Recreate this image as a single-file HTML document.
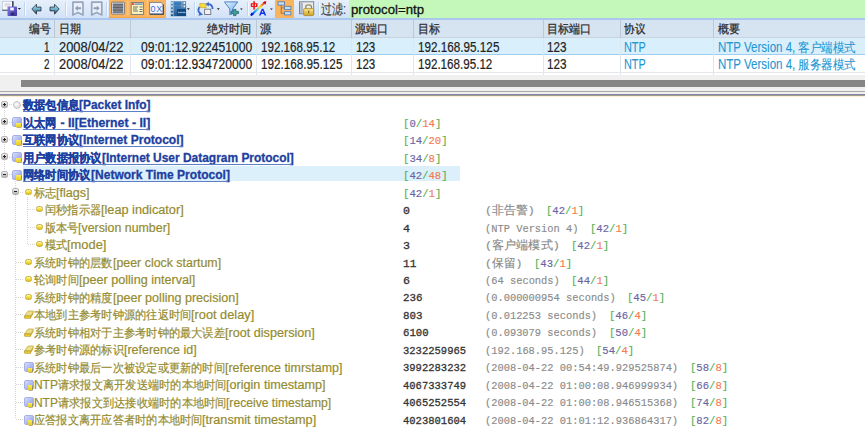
<!DOCTYPE html><html><head><meta charset="utf-8"><style>
*{margin:0;padding:0;box-sizing:border-box}
html,body{width:865px;height:439px;overflow:hidden;background:#fff;font-family:"Liberation Sans",sans-serif}
.f{position:absolute;white-space:nowrap;display:block;overflow:visible}
.f i{font-style:normal;display:inline-block;transform-origin:0 0;white-space:pre}
.a{position:absolute}
#tb{position:absolute;left:0;top:0;width:865px;height:18px;background:linear-gradient(#e7f0fb,#d2e2f7)}
#tbl{position:absolute;left:0;top:18px;width:865px;height:2px;background:#abc7ee}
.sep{position:absolute;top:2px;width:1px;height:14px;background:#c2d6f0;box-shadow:1px 0 0 #f5f9ff}
.org{position:absolute;top:0;height:18px;background:#fbb45e}
#filter{position:absolute;left:349px;top:0;width:516px;height:18px;background:#c4f8bb}
#hdr{position:absolute;left:0;top:20px;width:865px;height:18px;background:#d6e3f1;border-bottom:1px solid #c8d3df}
.hc{position:absolute;top:20px;width:1px;height:18px;background:#bdc8d4}
.cl{position:absolute;width:1px;background:#dfe5ec}
.h{font-size:11.6px;line-height:19px;color:#2a2a2a;-webkit-text-stroke:0.25px #2a2a2a}
.t{font-size:14px;line-height:18px;color:#222;-webkit-text-stroke:0.2px currentColor}
.ntp{color:#2496d2;-webkit-text-stroke:0.1px currentColor}
.n{font-size:12px;line-height:17.5px}
.b{font-weight:bold;color:#1d3f9f;-webkit-text-stroke:0.3px currentColor}
.u{position:absolute;height:1px;background:#5f7ec8}
.o{color:#958c30;-webkit-text-stroke:0.2px currentColor}
.m{font-family:"Liberation Mono",monospace;font-size:11.6px;line-height:17.5px;-webkit-text-stroke:0.15px currentColor}
.v{color:#333;-webkit-text-stroke:0.3px currentColor}
.d{color:#8a8a8a}
.g{color:#52b152}.p{color:#6a64a4}.r{color:#f57a50}
.dv{position:absolute;width:1px;background:repeating-linear-gradient(#d6d6d6 0 1px,transparent 1px 2px)}
.dh{position:absolute;height:1px;background:repeating-linear-gradient(90deg,#d6d6d6 0 1px,transparent 1px 2px)}
.ex{position:absolute;width:7px;height:7px;border:1px solid #b4b4b4;background:linear-gradient(#f0f0f0,#b4b4b4);border-radius:2px}
.ex:before{content:"";position:absolute;left:1px;top:2px;width:3px;height:1px;background:#222}
.ex.pl:after{content:"";position:absolute;left:2px;top:1px;width:1px;height:3px;background:#222}
</style></head><body>
<div id="tb"></div><div id="tbl"></div>
<div class="sep" style="left:24px"></div>
<div class="sep" style="left:65px"></div>
<div class="sep" style="left:106px"></div>
<div class="sep" style="left:194px"></div>
<div class="sep" style="left:247px"></div>
<div class="sep" style="left:318px"></div>
<div class="org" style="left:109px;width:57px"></div>
<div class="org" style="left:275px;width:19px"></div>
<svg class="a" style="left:0;top:0" width="350" height="18" viewBox="0 0 350 18">
<defs>
<linearGradient id="gArr" x1="0" y1="0" x2="0" y2="1"><stop offset="0" stop-color="#b0e0f0"/><stop offset="0.5" stop-color="#6fb0cc"/><stop offset="1" stop-color="#1e3444"/></linearGradient>
<linearGradient id="gFl" x1="0" y1="0" x2="1" y2="1"><stop offset="0" stop-color="#8a80e8"/><stop offset="1" stop-color="#3a2ea0"/></linearGradient>
<linearGradient id="gHex" x1="0" y1="0" x2="0" y2="1"><stop offset="0" stop-color="#6aa0d0"/><stop offset="1" stop-color="#1a5590"/></linearGradient>
<linearGradient id="gRb" x1="0" y1="1" x2="1" y2="0"><stop offset="0" stop-color="#0010e0"/><stop offset="0.35" stop-color="#20c0ff"/><stop offset="0.6" stop-color="#ffe020"/><stop offset="1" stop-color="#e01010"/></linearGradient>
<linearGradient id="gLk" x1="0" y1="0" x2="0" y2="1"><stop offset="0" stop-color="#ffe890"/><stop offset="1" stop-color="#d0a020"/></linearGradient>
<linearGradient id="gFun" x1="0" y1="0" x2="1" y2="1"><stop offset="0" stop-color="#e0f4ff"/><stop offset="1" stop-color="#6aa8e0"/></linearGradient>
</defs>
<!-- save icon -->
<rect x="2.5" y="1.5" width="10.5" height="9" fill="#fbfcfe" stroke="#c0c8d4" stroke-width="0.8"/>
<rect x="12" y="1.2" width="1.6" height="9.5" fill="#3c4452"/>
<rect x="2.2" y="9.6" width="11.4" height="1.3" fill="#5a6576"/>
<line x1="4.5" y1="4" x2="10.5" y2="4" stroke="#9ab0e0" stroke-width="0.8"/>
<line x1="4.5" y1="6" x2="10.5" y2="6" stroke="#e0b0b0" stroke-width="0.8"/>
<rect x="7.5" y="6.5" width="9.5" height="9.5" rx="0.8" fill="url(#gFl)"/>
<rect x="10.2" y="7.6" width="3.6" height="2.8" fill="#f4f4ff"/>
<rect x="10.8" y="12.6" width="3.4" height="2.6" fill="#30305a"/>
<path d="M17.8 8 L21 8 L19.4 9.8 Z" fill="#222"/>
<!-- back / forward arrows -->
<path d="M31.8 9 L36.5 4.2 L36.5 7.1 L41 7.1 L41 10.9 L36.5 10.9 L36.5 14.2 Z" fill="url(#gArr)" stroke="#24323e" stroke-width="0.8" stroke-linejoin="round"/>
<path d="M59.2 9 L54.5 4.2 L54.5 7.1 L50 7.1 L50 10.9 L54.5 10.9 L54.5 14.2 Z" fill="url(#gArr)" stroke="#24323e" stroke-width="0.8" stroke-linejoin="round"/>
<!-- bookmarks -->
<path d="M72.9 2.2 L83 2.2 L83 15 L78 12.6 L72.9 15 Z" fill="#eaf0f9" stroke="#98a7be" stroke-width="1.7" stroke-linejoin="round"/>
<path d="M75 8.2 L77.8 5.4 L77.8 7.2 L81 7.2 L81 9.2 L77.8 9.2 L77.8 11 Z" fill="#8e9db6"/>
<path d="M91.7 2.2 L101.8 2.2 L101.8 15 L96.7 12.6 L91.7 15 Z" fill="#eaf0f9" stroke="#98a7be" stroke-width="1.7" stroke-linejoin="round"/>
<path d="M99.6 8.2 L96.8 5.4 L96.8 7.2 L93.6 7.2 L93.6 9.2 L96.8 9.2 L96.8 11 Z" fill="#8e9db6"/>
<!-- orange group icons -->
<rect x="127.4" y="0" width="1" height="18" fill="#fdca8a"/>
<rect x="146.8" y="0" width="1" height="18" fill="#fdca8a"/>
<rect x="109" y="16.8" width="57" height="1.2" fill="#f2a450"/>
<rect x="111.6" y="2.2" width="12.8" height="11.8" rx="0.8" fill="#eef2f8" stroke="#5c6270" stroke-width="0.8"/>
<rect x="112.8" y="3.4" width="10.4" height="9.4" fill="#9a9ea8"/>
<g stroke="#4e525e" stroke-width="0.8"><line x1="112.8" y1="4.3" x2="123.2" y2="4.3"/><line x1="112.8" y1="5.9" x2="123.2" y2="5.9"/><line x1="112.8" y1="7.5" x2="123.2" y2="7.5"/><line x1="112.8" y1="9.1" x2="123.2" y2="9.1"/><line x1="112.8" y1="10.7" x2="123.2" y2="10.7"/><line x1="112.8" y1="12.3" x2="123.2" y2="12.3"/></g>
<rect x="131.2" y="2.6" width="12.2" height="11.8" fill="#fbf4b8" stroke="#707888" stroke-width="0.9"/>
<rect x="132" y="3.3" width="2.2" height="1.6" fill="#e03030"/>
<rect x="134.6" y="3.5" width="8" height="1.2" fill="#6080c0"/>
<g stroke="#6a7080" stroke-width="1"><line x1="133" y1="7" x2="138" y2="7"/><line x1="133" y1="9" x2="137" y2="9"/><line x1="133" y1="11" x2="138" y2="11"/><line x1="139.5" y1="7" x2="142.5" y2="7"/><line x1="139.5" y1="9.5" x2="142.5" y2="9.5"/><line x1="139.5" y1="11.5" x2="142.5" y2="11.5"/></g>
<path d="M149.6 2.4 L161 2.4 L163.5 4.9 L163.5 14.4 L149.6 14.4 Z" fill="#f6f8fd" stroke="#70788a" stroke-width="0.9"/>
<path d="M162.6 4.5 L163.8 4.5 L163.8 14.8 L150 14.8 L150 13.6 L162.6 13.6 Z" fill="#3a4458"/>
<text x="150.6" y="12.4" font-family="Liberation Sans" font-size="9" fill="#3a6ee0" letter-spacing="0.6">0X</text>
<!-- hex icon -->
<rect x="170.8" y="1" width="15.3" height="15.2" fill="url(#gHex)"/>
<g fill="#eaf2fa"><rect x="171.3" y="2" width="1.4" height="1.8"/><rect x="171.3" y="5.5" width="1.4" height="1.8"/><rect x="171.3" y="9" width="1.4" height="1.8"/><rect x="171.3" y="12.5" width="1.4" height="1.8"/><rect x="183.6" y="2" width="1.4" height="1.8"/><rect x="183.6" y="5.5" width="1.4" height="1.8"/></g>
<g fill="#3a78b8"><rect x="174" y="2.2" width="8" height="2.8"/><rect x="174" y="5.8" width="8" height="2.8"/></g>
<line x1="173.6" y1="1" x2="173.6" y2="16" stroke="#e0a060" stroke-width="0.8"/>
<line x1="181.8" y1="1" x2="181.8" y2="7.5" stroke="#e0a060" stroke-width="0.8"/>
<rect x="177" y="9" width="9" height="7" fill="#104880"/>
<g fill="#c8d8ea"><rect x="178.2" y="11.8" width="1.3" height="1.3"/><rect x="180.3" y="11.8" width="1.3" height="1.3"/><rect x="182.4" y="11.8" width="1.3" height="1.3"/><rect x="184.3" y="11.8" width="1.1" height="1.3"/></g>
<path d="M186.8 8.2 L189.8 8.2 L188.3 9.9 Z" fill="#222"/>
<!-- sync icon -->
<rect x="199.9" y="3.5" width="6.2" height="4.3" fill="#f6d840" stroke="#c0a030" stroke-width="0.6"/>
<rect x="204.6" y="9.2" width="6.2" height="5.3" fill="#f0f0f4" stroke="#70747c" stroke-width="0.9"/>
<path d="M207.8 4.2 C211.2 4.2 212.6 6.2 212.6 9" fill="none" stroke="#3a6ad0" stroke-width="1.8"/>
<path d="M205.6 4.2 L208.8 1.8 L208.8 6.6 Z" fill="#3a6ad0"/>
<path d="M199.4 7 C198 9.5 198.4 12 200 13.4" fill="none" stroke="#3a6ad0" stroke-width="1.8"/>
<path d="M198.6 15.8 L203 14.8 L199.6 11.6 Z" fill="#3a6ad0"/>
<path d="M216.8 8.2 L219.8 8.2 L218.3 9.9 Z" fill="#222"/>
<!-- filter icon -->
<path d="M224.4 1.9 L237.8 1.9 L232.5 9 L232.5 13.5 L229.8 14.8 L229.8 9 Z" fill="url(#gFun)" stroke="#4a78c0" stroke-width="0.9" stroke-linejoin="round"/>
<path d="M233.5 9.4 L236 9.4 L236 11.4 L238.6 11.4 L238.6 13.6 L236 13.6 L236 15.6 L233.5 15.6 L233.5 13.6 L231 13.6 L231 11.4 L233.5 11.4 Z" fill="#3aa0a0" stroke="#1e5a5a" stroke-width="0.7"/>
<path d="M240 8.4 L242.8 8.4 L241.4 10 Z" fill="#222"/>
<!-- text icon -->
<g fill="#f01818"><rect x="253.3" y="1.2" width="1.6" height="8.4"/><rect x="250.8" y="3.2" width="6.7" height="3.8"/></g>
<rect x="252.3" y="4.3" width="1" height="1.6" fill="#fff"/><rect x="255" y="4.3" width="1" height="1.6" fill="#fff"/>
<line x1="251" y1="15.2" x2="265.6" y2="1.8" stroke="url(#gRb)" stroke-width="2"/>
<path d="M266.4 1.2 L262.8 2.2 L265.4 4.8 Z" fill="#d01010"/>
<path d="M250.6 15.8 L251.2 12.6 L253.8 14.8 Z" fill="#0010c0"/>
<path d="M259 15.6 L261.8 8.8 L263.4 8.8 L266.2 15.6 L264.6 15.6 L264 14 L261.2 14 L260.6 15.6 Z M261.7 12.6 L263.5 12.6 L262.6 10.4 Z" fill="#1030e8"/>
<path d="M270 8.4 L272.8 8.4 L271.4 10 Z" fill="#222"/>
<!-- tree icon (orange button) -->
<path d="M281.2 5 L281.2 13.3 L284.6 13.3 M281.2 7.9 L284.6 7.9" fill="none" stroke="#a06a30" stroke-width="0.9"/>
<rect x="278" y="1.8" width="6.6" height="3.3" fill="#c8dcf2" stroke="#4a78b0" stroke-width="0.8"/>
<rect x="284.6" y="6.3" width="6.3" height="3.2" fill="#c8dcf2" stroke="#4a78b0" stroke-width="0.8"/>
<rect x="284.6" y="11.7" width="6.3" height="3.2" fill="#c8dcf2" stroke="#4a78b0" stroke-width="0.8"/>
<!-- lock icon -->
<rect x="299.5" y="1.8" width="14.2" height="12" fill="#e8ecf2" stroke="#707a88" stroke-width="0.9"/>
<rect x="300.3" y="2.6" width="2.5" height="10.4" fill="#a8b0c0"/>
<path d="M305.8 9 L305.8 6.6 C305.8 4.2 311.4 4.2 311.4 6.6 L311.4 9" fill="none" stroke="#9a8a50" stroke-width="1.3"/>
<rect x="303.6" y="8.6" width="10" height="7" rx="0.8" fill="url(#gLk)" stroke="#a08020" stroke-width="0.7"/>
<rect x="308.2" y="10.6" width="1" height="2.6" fill="#6a5010"/>
</svg>

<span class="f h" style="left:321.0px;top:0.3px;width:25.0px;font-size:14px;line-height:18px;color:#404040;-webkit-text-stroke:0.1px #404040"><i style="transform:scaleX(0.7839)">过滤:</i></span>
<div id="filter"></div>
<span class="f " style="left:350.8px;top:0.6px;width:73.0px;font-size:13.6px;line-height:18px;color:#111;-webkit-text-stroke:0.3px #111"><i style="transform:scaleX(0.9707)">protocol=ntp</i></span>
<div id="hdr"></div>
<div class="hc" style="left:54px"></div>
<div class="hc" style="left:130px"></div>
<div class="hc" style="left:256px"></div>
<div class="hc" style="left:351px"></div>
<div class="hc" style="left:413px"></div>
<div class="hc" style="left:543px"></div>
<div class="hc" style="left:620px"></div>
<div class="hc" style="left:713px"></div>
<span class="f h" style="left:29.3px;top:19.3px;width:21.6px;"><i style="transform:scaleX(0.9000)">编号</i></span>
<span class="f h" style="left:59.0px;top:19.3px;width:22.0px;"><i style="transform:scaleX(0.9167)">日期</i></span>
<span class="f h" style="left:207.3px;top:19.3px;width:44.4px;"><i style="transform:scaleX(0.9250)">绝对时间</i></span>
<span class="f h" style="left:259.8px;top:19.3px;width:11.4px;"><i style="transform:scaleX(0.9500)">源</i></span>
<span class="f h" style="left:355.2px;top:19.3px;width:33.0px;"><i style="transform:scaleX(0.9167)">源端口</i></span>
<span class="f h" style="left:418.0px;top:19.3px;width:22.3px;"><i style="transform:scaleX(0.9292)">目标</i></span>
<span class="f h" style="left:547.2px;top:19.3px;width:44.5px;"><i style="transform:scaleX(0.9271)">目标端口</i></span>
<span class="f h" style="left:624.2px;top:19.3px;width:21.2px;"><i style="transform:scaleX(0.8833)">协议</i></span>
<span class="f h" style="left:717.7px;top:19.3px;width:22.0px;"><i style="transform:scaleX(0.9167)">概要</i></span>
<div class="a" style="left:0;top:38px;width:865px;height:17px;background:#d9f0fc;border-bottom:1px solid #9fcdee"></div>
<div class="cl" style="left:54px;top:38px;height:37px"></div>
<div class="cl" style="left:130px;top:38px;height:37px"></div>
<div class="cl" style="left:256px;top:38px;height:37px"></div>
<div class="cl" style="left:351px;top:38px;height:37px"></div>
<div class="cl" style="left:413px;top:38px;height:37px"></div>
<div class="cl" style="left:543px;top:38px;height:37px"></div>
<div class="cl" style="left:620px;top:38px;height:37px"></div>
<div class="cl" style="left:713px;top:38px;height:37px"></div>
<div class="a" style="left:0;top:72px;width:865px;height:1px;background:#e3e7ec"></div>
<span class="f t" style="left:43.9px;top:37.8px;width:5.5px;"><i style="transform:scaleX(0.7054)">1</i></span>
<span class="f t" style="left:59.0px;top:37.8px;width:64.3px;"><i style="transform:scaleX(0.9175)">2008/04/22</i></span>
<span class="f t" style="left:141.3px;top:37.8px;width:111.2px;"><i style="transform:scaleX(0.8656)">09:01:12.922451000</i></span>
<span class="f t" style="left:260.6px;top:37.8px;width:74.3px;"><i style="transform:scaleX(0.8299)">192.168.95.12</i></span>
<span class="f t" style="left:355.7px;top:37.8px;width:19.3px;"><i style="transform:scaleX(0.8262)">123</i></span>
<span class="f t" style="left:418.0px;top:37.8px;width:81.4px;"><i style="transform:scaleX(0.8363)">192.168.95.125</i></span>
<span class="f t" style="left:547.2px;top:37.8px;width:19.5px;"><i style="transform:scaleX(0.8348)">123</i></span>
<span class="f t ntp" style="left:624.2px;top:37.8px;width:21.8px;"><i style="transform:scaleX(0.7786)">NTP</i></span>
<span class="f t ntp" style="left:717.7px;top:37.8px;width:77.3px;"><i style="transform:scaleX(0.8232)">NTP Version 4,</i></span>
<span class="f t ntp" style="left:797.9px;top:39.1px;width:57.5px;font-size:12.6px"><i style="transform:scaleX(0.8846)">客户端模式</i></span>
<span class="f t" style="left:43.9px;top:55.1px;width:5.5px;"><i style="transform:scaleX(0.7054)">2</i></span>
<span class="f t" style="left:59.0px;top:55.1px;width:64.3px;"><i style="transform:scaleX(0.9175)">2008/04/22</i></span>
<span class="f t" style="left:141.3px;top:55.1px;width:111.2px;"><i style="transform:scaleX(0.8656)">09:01:12.934720000</i></span>
<span class="f t" style="left:260.6px;top:55.1px;width:81.4px;"><i style="transform:scaleX(0.8363)">192.168.95.125</i></span>
<span class="f t" style="left:355.7px;top:55.1px;width:19.3px;"><i style="transform:scaleX(0.8262)">123</i></span>
<span class="f t" style="left:418.0px;top:55.1px;width:74.3px;"><i style="transform:scaleX(0.8299)">192.168.95.12</i></span>
<span class="f t" style="left:547.2px;top:55.1px;width:19.5px;"><i style="transform:scaleX(0.8348)">123</i></span>
<span class="f t ntp" style="left:624.2px;top:55.1px;width:21.8px;"><i style="transform:scaleX(0.7786)">NTP</i></span>
<span class="f t ntp" style="left:717.7px;top:55.1px;width:77.3px;"><i style="transform:scaleX(0.8232)">NTP Version 4,</i></span>
<span class="f t ntp" style="left:797.9px;top:56.4px;width:57.5px;font-size:12.6px"><i style="transform:scaleX(0.8846)">服务器模式</i></span>
<div class="a" style="left:0;top:75px;width:865px;height:16px;background:#f0f0f0"></div>
<div class="a" style="left:21px;top:80px;width:844px;height:7px;background:#858585"></div>
<div class="a" style="left:0;top:91px;width:865px;height:1px;background:#a9a9a9"></div>
<div class="a" style="left:0;top:92px;width:865px;height:2px;background:#f0f0f0"></div>
<div class="a" style="left:0;top:94px;width:865px;height:1px;background:#7e8ba2"></div>
<div class="a" style="left:0;top:95px;width:865px;height:1px;background:#a49a8c"></div>
<div class="a" style="left:0;top:96px;width:865px;height:1px;background:#fcecd8"></div>
<div class="a" style="left:23px;top:166.3px;width:437px;height:15px;background:#dcf0fc"></div>
<div class="dv" style="left:4px;top:108.3px;height:62.0px"></div>
<div class="dv" style="left:15px;top:179.3px;height:240.0px"></div>
<div class="dv" style="left:27px;top:196.8px;height:47.5px"></div>
<div class="dh" style="left:9px;top:104.3px;width:3px"></div>
<div class="dh" style="left:9px;top:121.8px;width:3px"></div>
<div class="dh" style="left:9px;top:139.3px;width:3px"></div>
<div class="dh" style="left:9px;top:156.8px;width:3px"></div>
<div class="dh" style="left:9px;top:174.3px;width:3px"></div>
<div class="dh" style="left:16px;top:191.8px;width:8px"></div>
<div class="dh" style="left:16px;top:261.8px;width:7px"></div>
<div class="dh" style="left:16px;top:279.3px;width:7px"></div>
<div class="dh" style="left:16px;top:296.8px;width:7px"></div>
<div class="dh" style="left:16px;top:314.3px;width:7px"></div>
<div class="dh" style="left:16px;top:331.8px;width:7px"></div>
<div class="dh" style="left:16px;top:349.3px;width:7px"></div>
<div class="dh" style="left:16px;top:366.8px;width:7px"></div>
<div class="dh" style="left:16px;top:384.3px;width:7px"></div>
<div class="dh" style="left:16px;top:401.8px;width:7px"></div>
<div class="dh" style="left:16px;top:419.3px;width:7px"></div>
<div class="dh" style="left:28px;top:209.3px;width:7px"></div>
<div class="dh" style="left:28px;top:226.8px;width:7px"></div>
<div class="dh" style="left:28px;top:244.3px;width:7px"></div>
<div class="ex pl" style="left:1px;top:100.8px"></div>
<div class="ex pl" style="left:1px;top:118.3px"></div>
<div class="ex pl" style="left:1px;top:135.8px"></div>
<div class="ex pl" style="left:1px;top:153.3px"></div>
<div class="ex" style="left:1px;top:170.8px"></div>
<div class="ex" style="left:12px;top:188.3px"></div>
<div class="a" style="left:13px;top:100.8px;width:8px;height:8px;border-radius:50%;border:1px solid #c4c4c4;background:radial-gradient(circle at 40% 35%,#fafafa,#d6d6d6)"></div>
<span class="f n b" style="left:23.2px;top:97.1px;width:56.2px;"><i style="transform:scaleX(0.9367)">数据包信息</i></span>
<span class="f n b" style="left:79.4px;top:97.1px;width:71.5px;"><i style="transform:scaleX(0.9928)">[Packet Info]</i></span>
<div class="u" style="left:23.2px;top:111.3px;width:126.5px"></div>
<div class="a" style="left:12.0px;top:117.2px;width:10px;height:10px;border-radius:2px;border:1px solid #a6b0e6;background:linear-gradient(135deg,#d8e0fa,#aab4ee 60%,#9aa6e8)"></div>
<div class="a" style="left:16.3px;top:122.5px;width:4.6px;height:4.6px;background:linear-gradient(#f8ec60,#e8cc20);box-shadow:0.6px 0.6px 0 #8a7a30"></div>
<span class="f n b" style="left:23.2px;top:114.6px;width:33.7px;"><i style="transform:scaleX(0.9361)">以太网</i></span>
<span class="f n b" style="left:56.9px;top:114.6px;width:93.3px;"><i style="transform:scaleX(1.0214)"> - II[Ethernet - II]</i></span>
<div class="u" style="left:23.2px;top:128.8px;width:125.8px"></div>
<div class="a" style="left:12.0px;top:134.7px;width:10px;height:10px;border-radius:2px;border:1px solid #a6b0e6;background:linear-gradient(135deg,#d8e0fa,#aab4ee 60%,#9aa6e8)"></div>
<div class="a" style="left:16.3px;top:140.0px;width:4.6px;height:4.6px;background:linear-gradient(#f8ec60,#e8cc20);box-shadow:0.6px 0.6px 0 #8a7a30"></div>
<span class="f n b" style="left:23.2px;top:132.2px;width:56.2px;"><i style="transform:scaleX(0.9367)">互联网协议</i></span>
<span class="f n b" style="left:79.4px;top:132.2px;width:104.6px;"><i style="transform:scaleX(1.0058)">[Internet Protocol]</i></span>
<div class="u" style="left:23.2px;top:146.3px;width:159.6px"></div>
<div class="a" style="left:12.0px;top:152.2px;width:10px;height:10px;border-radius:2px;border:1px solid #a6b0e6;background:linear-gradient(135deg,#d8e0fa,#aab4ee 60%,#9aa6e8)"></div>
<div class="a" style="left:16.3px;top:157.5px;width:4.6px;height:4.6px;background:linear-gradient(#f8ec60,#e8cc20);box-shadow:0.6px 0.6px 0 #8a7a30"></div>
<span class="f n b" style="left:23.2px;top:149.7px;width:78.6px;"><i style="transform:scaleX(0.9357)">用户数据报协议</i></span>
<span class="f n b" style="left:101.8px;top:149.7px;width:191.8px;"><i style="transform:scaleX(0.9953)">[Internet User Datagram Protocol]</i></span>
<div class="u" style="left:23.2px;top:163.8px;width:269.2px"></div>
<div class="a" style="left:12.0px;top:169.7px;width:10px;height:10px;border-radius:2px;border:1px solid #a6b0e6;background:linear-gradient(135deg,#d8e0fa,#aab4ee 60%,#9aa6e8)"></div>
<div class="a" style="left:16.3px;top:175.0px;width:4.6px;height:4.6px;background:linear-gradient(#f8ec60,#e8cc20);box-shadow:0.6px 0.6px 0 #8a7a30"></div>
<span class="f n b" style="left:23.2px;top:167.2px;width:67.4px;"><i style="transform:scaleX(0.9361)">网络时间协议</i></span>
<span class="f n b" style="left:90.6px;top:167.2px;width:138.9px;"><i style="transform:scaleX(1.0031)">[Network Time Protocol]</i></span>
<div class="u" style="left:23.2px;top:181.3px;width:205.1px"></div>
<span class="f m" style="left:403.2px;top:114.5px;width:38.4px;"><i style="transform:scaleX(0.9187)"><span class="g">[</span><span class="p">0</span><span class="g">/</span><span class="r">14</span><span class="g">]</span></i></span>
<span class="f m" style="left:403.2px;top:132.0px;width:44.6px;"><i style="transform:scaleX(0.9149)"><span class="g">[</span><span class="p">14</span><span class="g">/</span><span class="r">20</span><span class="g">]</span></i></span>
<span class="f m" style="left:403.2px;top:149.5px;width:38.4px;"><i style="transform:scaleX(0.9187)"><span class="g">[</span><span class="p">34</span><span class="g">/</span><span class="r">8</span><span class="g">]</span></i></span>
<span class="f m" style="left:403.2px;top:167.0px;width:44.6px;"><i style="transform:scaleX(0.9149)"><span class="g">[</span><span class="p">42</span><span class="g">/</span><span class="r">48</span><span class="g">]</span></i></span>
<div class="a" style="left:24.5px;top:188.8px;width:7.2px;height:6px;border-radius:2.5px;border:1px solid #c8b038;background:linear-gradient(#fff8b0,#f2d830 60%,#e0c020)"></div>
<span class="f n o" style="left:33.9px;top:184.9px;width:22.5px;"><i style="transform:scaleX(0.9375)">标志</i></span>
<span class="f n o" style="left:56.4px;top:184.9px;width:33.6px;"><i style="transform:scaleX(1.0495)">[flags]</i></span>
<span class="f m" style="left:403.2px;top:184.5px;width:38.4px;"><i style="transform:scaleX(0.9187)"><span class="g">[</span><span class="p">42</span><span class="g">/</span><span class="r">1</span><span class="g">]</span></i></span>
<div class="a" style="left:36.0px;top:206.3px;width:7.2px;height:6px;border-radius:2.5px;border:1px solid #c8b038;background:linear-gradient(#fff8b0,#f2d830 60%,#e0c020)"></div>
<span class="f n o" style="left:44.7px;top:202.4px;width:56.2px;"><i style="transform:scaleX(0.9367)">闰秒指示器</i></span>
<span class="f n o" style="left:100.9px;top:202.4px;width:82.7px;"><i style="transform:scaleX(1.0596)">[leap indicator]</i></span>
<span class="f m v" style="left:403.0px;top:202.0px;width:7.0px;"><i style="transform:scaleX(1.0045)">0</i></span>
<span class="f m d" style="left:484.6px;top:202.0px;width:49.8px;"><i style="transform:scaleX(0.9976)">(非告警)</i></span>
<span class="f m" style="left:546.3px;top:202.0px;width:38.2px;"><i style="transform:scaleX(0.9139)"><span class="g">[</span><span class="p">42</span><span class="g">/</span><span class="r">1</span><span class="g">]</span></i></span>
<div class="a" style="left:36.0px;top:223.8px;width:7.2px;height:6px;border-radius:2.5px;border:1px solid #c8b038;background:linear-gradient(#fff8b0,#f2d830 60%,#e0c020)"></div>
<span class="f n o" style="left:44.7px;top:219.9px;width:33.7px;"><i style="transform:scaleX(0.9361)">版本号</i></span>
<span class="f n o" style="left:78.4px;top:219.9px;width:92.2px;"><i style="transform:scaleX(1.0316)">[version number]</i></span>
<span class="f m v" style="left:403.0px;top:219.5px;width:7.0px;"><i style="transform:scaleX(1.0045)">4</i></span>
<span class="f m d" style="left:484.6px;top:219.5px;width:93.5px;"><i style="transform:scaleX(0.8958)">(NTP Version 4)</i></span>
<span class="f m" style="left:589.9px;top:219.5px;width:38.2px;"><i style="transform:scaleX(0.9139)"><span class="g">[</span><span class="p">42</span><span class="g">/</span><span class="r">1</span><span class="g">]</span></i></span>
<div class="a" style="left:36.0px;top:241.3px;width:7.2px;height:6px;border-radius:2.5px;border:1px solid #c8b038;background:linear-gradient(#fff8b0,#f2d830 60%,#e0c020)"></div>
<span class="f n o" style="left:44.7px;top:237.4px;width:22.5px;"><i style="transform:scaleX(0.9375)">模式</i></span>
<span class="f n o" style="left:67.2px;top:237.4px;width:39.4px;"><i style="transform:scaleX(1.0739)">[mode]</i></span>
<span class="f m v" style="left:403.0px;top:237.0px;width:7.0px;"><i style="transform:scaleX(1.0045)">3</i></span>
<span class="f m d" style="left:484.6px;top:237.0px;width:74.8px;"><i style="transform:scaleX(1.0119)">(客户端模式)</i></span>
<span class="f m" style="left:571.2px;top:237.0px;width:38.2px;"><i style="transform:scaleX(0.9139)"><span class="g">[</span><span class="p">42</span><span class="g">/</span><span class="r">1</span><span class="g">]</span></i></span>
<div class="a" style="left:24.5px;top:258.8px;width:7.2px;height:6px;border-radius:2.5px;border:1px solid #c8b038;background:linear-gradient(#fff8b0,#f2d830 60%,#e0c020)"></div>
<span class="f n o" style="left:33.9px;top:254.9px;width:78.6px;"><i style="transform:scaleX(0.9357)">系统时钟的层数</i></span>
<span class="f n o" style="left:112.5px;top:254.9px;width:108.1px;"><i style="transform:scaleX(1.0324)">[peer clock startum]</i></span>
<span class="f m v" style="left:403.0px;top:254.5px;width:13.3px;"><i style="transform:scaleX(0.9553)">11</i></span>
<span class="f m d" style="left:484.6px;top:254.5px;width:37.4px;"><i style="transform:scaleX(0.9862)">(保留)</i></span>
<span class="f m" style="left:533.8px;top:254.5px;width:38.2px;"><i style="transform:scaleX(0.9139)"><span class="g">[</span><span class="p">43</span><span class="g">/</span><span class="r">1</span><span class="g">]</span></i></span>
<div class="a" style="left:24.5px;top:276.3px;width:7.2px;height:6px;border-radius:2.5px;border:1px solid #c8b038;background:linear-gradient(#fff8b0,#f2d830 60%,#e0c020)"></div>
<span class="f n o" style="left:33.9px;top:272.4px;width:44.9px;"><i style="transform:scaleX(0.9354)">轮询时间</i></span>
<span class="f n o" style="left:78.8px;top:272.4px;width:116.3px;"><i style="transform:scaleX(1.0503)">[peer polling interval]</i></span>
<span class="f m v" style="left:403.0px;top:271.9px;width:7.0px;"><i style="transform:scaleX(1.0045)">6</i></span>
<span class="f m d" style="left:484.6px;top:271.9px;width:74.8px;"><i style="transform:scaleX(0.8958)">(64 seconds)</i></span>
<span class="f m" style="left:571.2px;top:271.9px;width:38.2px;"><i style="transform:scaleX(0.9139)"><span class="g">[</span><span class="p">44</span><span class="g">/</span><span class="r">1</span><span class="g">]</span></i></span>
<div class="a" style="left:24.5px;top:293.8px;width:7.2px;height:6px;border-radius:2.5px;border:1px solid #c8b038;background:linear-gradient(#fff8b0,#f2d830 60%,#e0c020)"></div>
<span class="f n o" style="left:33.9px;top:289.9px;width:78.6px;"><i style="transform:scaleX(0.9357)">系统时钟的精度</i></span>
<span class="f n o" style="left:112.5px;top:289.9px;width:125.7px;"><i style="transform:scaleX(1.0468)">[peer polling precision]</i></span>
<span class="f m v" style="left:403.0px;top:289.4px;width:19.5px;"><i style="transform:scaleX(0.9341)">236</i></span>
<span class="f m d" style="left:484.6px;top:289.4px;width:130.8px;"><i style="transform:scaleX(0.8952)">(0.000000954 seconds)</i></span>
<span class="f m" style="left:627.3px;top:289.4px;width:38.2px;"><i style="transform:scaleX(0.9139)"><span class="g">[</span><span class="p">45</span><span class="g">/</span><span class="r">1</span><span class="g">]</span></i></span>
<svg class="a" style="left:24.0px;top:310.0px" width="10" height="9" viewBox="0 0 10 9"><path d="M0.6 6 L3.6 1.6 Q4 1 4.8 1 L9.2 1 Q9.8 1.2 9.4 1.8 L6.6 6 Z" fill="#ece08a" stroke="#b8a030" stroke-width="0.7"/><path d="M0.6 6 L6.6 6 L6.6 8.3 L0.8 8.3 Q0.4 8.3 0.5 7.6 Z" fill="#f2d42a" stroke="#b09020" stroke-width="0.7"/><path d="M6.6 6 L9.4 1.8 L9.4 4 L6.6 8.3 Z" fill="#c8b030"/></svg>
<span class="f n o" style="left:33.9px;top:307.4px;width:157.2px;"><i style="transform:scaleX(0.9357)">本地到主参考时钟源的往返时间</i></span>
<span class="f n o" style="left:191.1px;top:307.4px;width:63.2px;"><i style="transform:scaleX(1.0644)">[root delay]</i></span>
<span class="f m v" style="left:403.0px;top:306.9px;width:19.5px;"><i style="transform:scaleX(0.9341)">803</i></span>
<span class="f m d" style="left:484.6px;top:306.9px;width:112.1px;"><i style="transform:scaleX(0.8951)">(0.012253 seconds)</i></span>
<span class="f m" style="left:608.6px;top:306.9px;width:38.2px;"><i style="transform:scaleX(0.9139)"><span class="g">[</span><span class="p">46</span><span class="g">/</span><span class="r">4</span><span class="g">]</span></i></span>
<svg class="a" style="left:24.0px;top:327.5px" width="10" height="9" viewBox="0 0 10 9"><path d="M0.6 6 L3.6 1.6 Q4 1 4.8 1 L9.2 1 Q9.8 1.2 9.4 1.8 L6.6 6 Z" fill="#ece08a" stroke="#b8a030" stroke-width="0.7"/><path d="M0.6 6 L6.6 6 L6.6 8.3 L0.8 8.3 Q0.4 8.3 0.5 7.6 Z" fill="#f2d42a" stroke="#b09020" stroke-width="0.7"/><path d="M6.6 6 L9.4 1.8 L9.4 4 L6.6 8.3 Z" fill="#c8b030"/></svg>
<span class="f n o" style="left:33.9px;top:324.9px;width:190.9px;"><i style="transform:scaleX(0.9358)">系统时钟相对于主参考时钟的最大误差</i></span>
<span class="f n o" style="left:224.8px;top:324.9px;width:89.8px;"><i style="transform:scaleX(1.0516)">[root dispersion]</i></span>
<span class="f m v" style="left:403.0px;top:324.4px;width:25.7px;"><i style="transform:scaleX(0.9230)">6100</i></span>
<span class="f m d" style="left:484.6px;top:324.4px;width:112.1px;"><i style="transform:scaleX(0.8951)">(0.093079 seconds)</i></span>
<span class="f m" style="left:608.6px;top:324.4px;width:38.2px;"><i style="transform:scaleX(0.9139)"><span class="g">[</span><span class="p">50</span><span class="g">/</span><span class="r">4</span><span class="g">]</span></i></span>
<svg class="a" style="left:24.0px;top:345.0px" width="10" height="9" viewBox="0 0 10 9"><path d="M0.6 6 L3.6 1.6 Q4 1 4.8 1 L9.2 1 Q9.8 1.2 9.4 1.8 L6.6 6 Z" fill="#ece08a" stroke="#b8a030" stroke-width="0.7"/><path d="M0.6 6 L6.6 6 L6.6 8.3 L0.8 8.3 Q0.4 8.3 0.5 7.6 Z" fill="#f2d42a" stroke="#b09020" stroke-width="0.7"/><path d="M6.6 6 L9.4 1.8 L9.4 4 L6.6 8.3 Z" fill="#c8b030"/></svg>
<span class="f n o" style="left:33.9px;top:342.4px;width:89.8px;"><i style="transform:scaleX(0.9354)">参考时钟源的标识</i></span>
<span class="f n o" style="left:123.7px;top:342.4px;width:72.6px;"><i style="transform:scaleX(1.0364)">[reference id]</i></span>
<span class="f m v" style="left:403.0px;top:341.9px;width:63.1px;"><i style="transform:scaleX(0.9069)">3232259965</i></span>
<span class="f m d" style="left:484.6px;top:341.9px;width:99.7px;"><i style="transform:scaleX(0.8956)">(192.168.95.125)</i></span>
<span class="f m" style="left:596.1px;top:341.9px;width:38.2px;"><i style="transform:scaleX(0.9139)"><span class="g">[</span><span class="p">54</span><span class="g">/</span><span class="r">4</span><span class="g">]</span></i></span>
<div class="a" style="left:23.5px;top:362.2px;width:10px;height:10px;border-radius:2px;border:1px solid #a6b0e6;background:linear-gradient(135deg,#d8e0fa,#aab4ee 60%,#9aa6e8)"></div>
<div class="a" style="left:27.8px;top:367.5px;width:4.6px;height:4.6px;background:linear-gradient(#f8ec60,#e8cc20);box-shadow:0.6px 0.6px 0 #8a7a30"></div>
<span class="f n o" style="left:33.9px;top:359.9px;width:190.9px;"><i style="transform:scaleX(0.9358)">系统时钟最后一次被设定或更新的时间</i></span>
<span class="f n o" style="left:224.8px;top:359.9px;width:117.4px;"><i style="transform:scaleX(1.0355)">[reference timrstamp]</i></span>
<span class="f m v" style="left:403.0px;top:359.4px;width:63.1px;"><i style="transform:scaleX(0.9069)">3992283232</i></span>
<span class="f m d" style="left:484.6px;top:359.4px;width:193.1px;"><i style="transform:scaleX(0.8953)">(2008-04-22 00:54:49.929525874)</i></span>
<span class="f m" style="left:689.6px;top:359.4px;width:38.2px;"><i style="transform:scaleX(0.9139)"><span class="g">[</span><span class="p">58</span><span class="g">/</span><span class="r">8</span><span class="g">]</span></i></span>
<div class="a" style="left:23.5px;top:379.7px;width:10px;height:10px;border-radius:2px;border:1px solid #a6b0e6;background:linear-gradient(135deg,#d8e0fa,#aab4ee 60%,#9aa6e8)"></div>
<div class="a" style="left:27.8px;top:385.0px;width:4.6px;height:4.6px;background:linear-gradient(#f8ec60,#e8cc20);box-shadow:0.6px 0.6px 0 #8a7a30"></div>
<span class="f n o" style="left:33.9px;top:377.4px;width:24.0px;"><i style="transform:scaleX(1.0000)">NTP</i></span>
<span class="f n o" style="left:57.9px;top:377.4px;width:168.5px;"><i style="transform:scaleX(0.9361)">请求报文离开发送端时的本地时间</i></span>
<span class="f n o" style="left:226.4px;top:377.4px;width:99.6px;"><i style="transform:scaleX(1.0517)">[origin timestamp]</i></span>
<span class="f m v" style="left:403.0px;top:376.9px;width:63.1px;"><i style="transform:scaleX(0.9069)">4067333749</i></span>
<span class="f m d" style="left:484.6px;top:376.9px;width:193.1px;"><i style="transform:scaleX(0.8953)">(2008-04-22 01:00:08.946999934)</i></span>
<span class="f m" style="left:689.6px;top:376.9px;width:38.2px;"><i style="transform:scaleX(0.9139)"><span class="g">[</span><span class="p">66</span><span class="g">/</span><span class="r">8</span><span class="g">]</span></i></span>
<div class="a" style="left:23.5px;top:397.2px;width:10px;height:10px;border-radius:2px;border:1px solid #a6b0e6;background:linear-gradient(135deg,#d8e0fa,#aab4ee 60%,#9aa6e8)"></div>
<div class="a" style="left:27.8px;top:402.5px;width:4.6px;height:4.6px;background:linear-gradient(#f8ec60,#e8cc20);box-shadow:0.6px 0.6px 0 #8a7a30"></div>
<span class="f n o" style="left:33.9px;top:394.9px;width:24.0px;"><i style="transform:scaleX(1.0000)">NTP</i></span>
<span class="f n o" style="left:57.9px;top:394.9px;width:168.5px;"><i style="transform:scaleX(0.9361)">请求报文到达接收端时的本地时间</i></span>
<span class="f n o" style="left:226.4px;top:394.9px;width:105.2px;"><i style="transform:scaleX(1.0111)">[receive timestamp]</i></span>
<span class="f m v" style="left:403.0px;top:394.4px;width:63.1px;"><i style="transform:scaleX(0.9069)">4065252554</i></span>
<span class="f m d" style="left:484.6px;top:394.4px;width:193.1px;"><i style="transform:scaleX(0.8953)">(2008-04-22 01:00:08.946515368)</i></span>
<span class="f m" style="left:689.6px;top:394.4px;width:38.2px;"><i style="transform:scaleX(0.9139)"><span class="g">[</span><span class="p">74</span><span class="g">/</span><span class="r">8</span><span class="g">]</span></i></span>
<div class="a" style="left:23.5px;top:414.7px;width:10px;height:10px;border-radius:2px;border:1px solid #a6b0e6;background:linear-gradient(135deg,#d8e0fa,#aab4ee 60%,#9aa6e8)"></div>
<div class="a" style="left:27.8px;top:420.0px;width:4.6px;height:4.6px;background:linear-gradient(#f8ec60,#e8cc20);box-shadow:0.6px 0.6px 0 #8a7a30"></div>
<span class="f n o" style="left:33.9px;top:412.4px;width:168.5px;"><i style="transform:scaleX(0.9361)">应答报文离开应答者时的本地时间</i></span>
<span class="f n o" style="left:202.4px;top:412.4px;width:114.2px;"><i style="transform:scaleX(1.0571)">[transmit timestamp]</i></span>
<span class="f m v" style="left:403.0px;top:411.9px;width:63.1px;"><i style="transform:scaleX(0.9069)">4023801604</i></span>
<span class="f m d" style="left:484.6px;top:411.9px;width:193.1px;"><i style="transform:scaleX(0.8953)">(2008-04-22 01:01:12.936864317)</i></span>
<span class="f m" style="left:689.6px;top:411.9px;width:38.2px;"><i style="transform:scaleX(0.9139)"><span class="g">[</span><span class="p">82</span><span class="g">/</span><span class="r">8</span><span class="g">]</span></i></span>
<script>
(function(){var els=document.querySelectorAll('.f');var out=[];for(var k=0;k<els.length;k++){var e=els[k];var i=e.firstElementChild;var old=i.style.transform;i.style.transform='none';var tw=parseFloat(e.style.width);var nw=i.getBoundingClientRect().width;var s=nw>0?tw/nw:1;i.style.transform='scaleX('+s+')';out.push(s);}window.__sc=out;})();
</script>
</body></html>
